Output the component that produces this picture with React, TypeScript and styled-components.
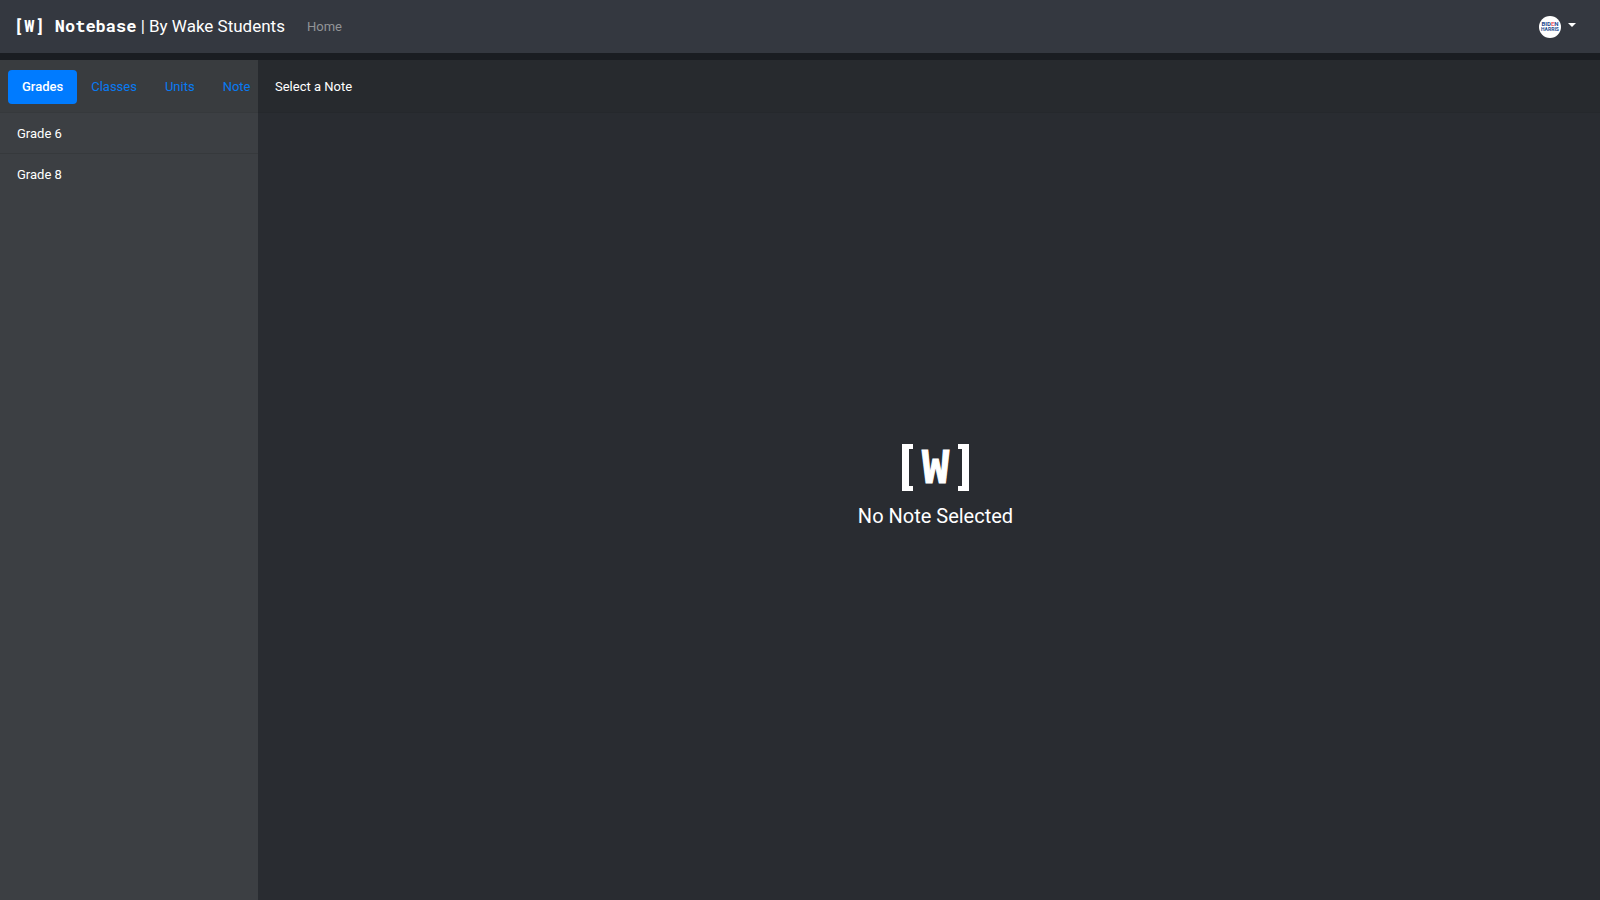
import React, { useState } from "react";
import styled, { createGlobalStyle } from "styled-components";

const GlobalStyle = createGlobalStyle`
  *, *::before, *::after { box-sizing: border-box; }
  body {
    margin: 0;
    background: #292c31;
    color: #fff;
    font: 400 13px/20px Roboto, "Liberation Sans", sans-serif;
  }
  button { font: inherit; color: inherit; border: 0; background: none; cursor: pointer; }
`;

const Page = styled.div`
  display: flex;
  flex-direction: column;
  min-height: 100vh;
`;

const Navbar = styled.nav`
  display: flex;
  align-items: center;
  height: 60px;
  padding: 0 24px 2px 14px;
  background: #343840;
  border-bottom: 7px solid #1a1d22;
`;

const Brand = styled.a`
  color: #fff;
  font-size: 17px;
  line-height: 26px;
  white-space: pre;
  text-decoration: none;
`;

const BrandName = styled.strong`
  font: 700 17px/26px "Roboto Mono", "DejaVu Sans Mono", monospace;
`;

const NavLink = styled.a`
  margin-left: 22px;
  padding-top: 3px;
  color: #929497;
  text-decoration: none;
`;

const UserMenu = styled.button`
  display: flex;
  align-items: center;
  gap: 7px;
  margin-left: auto;
  padding: 2px 0 0;
`;

const Caret = styled.span`
  margin-bottom: 4px;
  border: 4px solid transparent;
  border-top-color: #fff;
  border-bottom: 0;
`;

const Workspace = styled.div`
  display: flex;
  flex: 1;
`;

const Sidebar = styled.aside`
  flex: 0 0 258px;
  overflow: hidden;
  background: #3c3f43;
`;

const Tabs = styled.div`
  display: flex;
  align-items: center;
  height: 53px;
  padding: 2px 8px 0;
  background: #393c3f;
  border-bottom: 1px solid #36393c;
`;

const Tab = styled.button<{ $active: boolean }>`
  flex: none;
  height: 34px;
  padding: 0 14px;
  border-radius: 4px;
  font-weight: ${(p) => (p.$active ? 500 : 400)};
  color: ${(p) => (p.$active ? "#fff" : "#087af2")};
  background: ${(p) => (p.$active ? "#007bff" : "transparent")};
`;

const GradeList = styled.ul`
  margin: 0;
  padding: 0;
  list-style: none;
`;

const GradeItem = styled.li`
  & + & { border-top: 1px solid #36393c; }
`;

const GradeButton = styled.button`
  display: block;
  width: 100%;
  height: 40px;
  padding: 1px 17px 0;
  text-align: left;
`;

const Content = styled.main`
  display: flex;
  flex: 1;
  flex-direction: column;
`;

const NoteHeader = styled.header`
  display: flex;
  align-items: center;
  height: 53px;
  padding: 2px 17px 0;
  background: #272a2e;
  border-bottom: 1px solid #25282c;
`;

const EmptyState = styled.section`
  display: flex;
  flex: 1;
  flex-direction: column;
  align-items: center;
  justify-content: center;
  padding: 0 0 44px 13px;
`;

const Logo = styled.div`
  display: flex;
  align-items: center;
  gap: 9px;
  height: 60px;
  font: 700 45px/60px "DejaVu Sans Mono", monospace;
  -webkit-text-stroke: 1px #fff;
`;

const Bracket = styled.span<{ $side: "left" | "right" }>`
  width: 11px;
  height: 47px;
  border: solid #fff;
  border-width: ${(p) => (p.$side === "left" ? "5px 0 5px 7px" : "5px 7px 5px 0")};
`;

const EmptyText = styled.p`
  margin: 2px 0 0;
  font-size: 20px;
  line-height: 32px;
`;

const Avatar = () => (
  <svg width="22" height="22" viewBox="0 0 22 22" role="img" aria-label="Account">
    <circle cx="11" cy="11" r="11" fill="#fff" />
    <g fontFamily="Roboto, sans-serif" fontWeight="700" fontSize="6" fill="#254b8e" textAnchor="middle">
      <text x="11" y="10">BID<tspan fill="#f0626b">E</tspan>N</text>
      <text x="11" y="15" fontSize="5">HARRIS</text>
    </g>
  </svg>
);

const tabs = ["Grades", "Classes", "Units", "Note"];
const grades = ["Grade 6", "Grade 8"];

export default function App() {
  const [active, setActive] = useState("Grades");
  return (
    <Page>
      <GlobalStyle />
      <Navbar>
        <Brand href="#"><BrandName>[W] Notebase</BrandName> | By Wake Students</Brand>
        <NavLink href="#">Home</NavLink>
        <UserMenu aria-label="User menu"><Avatar /><Caret /></UserMenu>
      </Navbar>
      <Workspace>
        <Sidebar>
          <Tabs role="tablist">
            {tabs.map((t) => (
              <Tab key={t} role="tab" aria-selected={t === active} $active={t === active} onClick={() => setActive(t)}>{t}</Tab>
            ))}
          </Tabs>
          <GradeList>
            {grades.map((g) => (
              <GradeItem key={g}><GradeButton>{g}</GradeButton></GradeItem>
            ))}
          </GradeList>
        </Sidebar>
        <Content>
          <NoteHeader>Select a Note</NoteHeader>
          <EmptyState>
            <Logo><Bracket $side="left" />W<Bracket $side="right" /></Logo>
            <EmptyText>No Note Selected</EmptyText>
          </EmptyState>
        </Content>
      </Workspace>
    </Page>
  );
}
